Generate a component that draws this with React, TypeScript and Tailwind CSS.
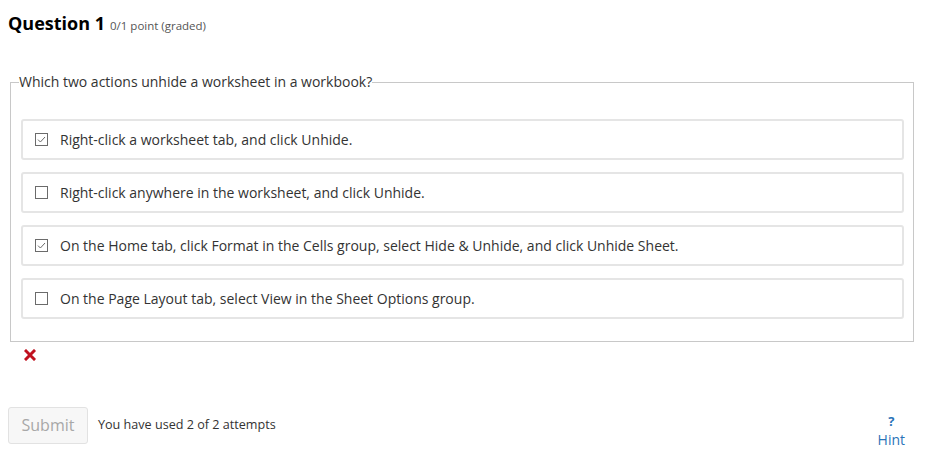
import React from "react";

const options = [
  { text: "Right-click a worksheet tab, and click Unhide.", checked: true },
  { text: "Right-click anywhere in the worksheet, and click Unhide.", checked: false },
  { text: "On the Home tab, click Format in the Cells group, select Hide & Unhide, and click Unhide Sheet.", checked: true },
  { text: "On the Page Layout tab, select View in the Sheet Options group.", checked: false },
];

function Box({ checked }: { checked: boolean }) {
  return (
    <svg width="13" height="13" viewBox="0 0 13 13" className="shrink-0">
      <rect x="0.5" y="0.5" width="12" height="12" fill="#fff" stroke="#6b6b6b" strokeWidth="1" />
      {checked && <path d="M3 6.6 L5.4 9 L10 4" fill="none" stroke="#6b6b6b" strokeWidth="1" />}
    </svg>
  );
}

export default function App() {
  return (
    <div className="w-[934px] h-[466px] bg-white text-[#333] overflow-hidden" style={{ fontFamily: '"Open Sans", sans-serif' }}>
      <div className="pt-[11px] pl-[8px] flex items-baseline">
        <span className="text-[18px] font-bold text-black leading-[24px]">Question 1</span>
        <span className="text-[11.5px] text-[#555] ml-[5px]">0/1 point (graded)</span>
      </div>
      <fieldset className="mt-[37px] ml-[10px] w-[904px] border border-[#c8c8c8] pl-[10px] pr-[9px] pb-[22px]">
        <legend className="text-[14px] leading-[20px] -ml-[2px] text-[#333]">Which two actions unhide a worksheet in a workbook?</legend>
        <div className="mt-[27px] flex flex-col gap-[12px]">
          {options.map((o, i) => (
            <div key={i} className="h-[41px] border-2 border-[#e5e5e5] rounded-[3px] flex items-center pl-[12px] gap-[12px]">
              <Box checked={o.checked} />
              <span className="text-[14px] text-[#333]">{o.text}</span>
            </div>
          ))}
        </div>
      </fieldset>
      <div className="ml-[24px] mt-[7px] h-[12px] w-[12px]">
        <svg width="12" height="12" viewBox="0 0 12 12">
          <path d="M2 2 L10 10 M10 2 L2 10" stroke="#c0111f" strokeWidth="3" strokeLinecap="square" />
        </svg>
      </div>
      <div className="mt-[46px] flex items-start justify-between pl-[8px] pr-[29px]">
        <div className="flex items-center">
          <div className="w-[80px] h-[37px] border border-[#e2e2e2] rounded-[3px] bg-[#f7f7f7] flex items-center justify-center text-[16px] leading-[20px] pb-[1px] text-[#a8a8a8]">
            Submit
          </div>
          <span className="ml-[10px] text-[12.6px] text-[#333]">You have used 2 of 2 attempts</span>
        </div>
        <div className="flex flex-col items-center mt-[6px] text-[#2a73b8]">
          <span className="text-[13px] font-bold leading-[16px]">?</span>
          <span className="text-[14px] leading-[18px] mt-[2px]">Hint</span>
        </div>
      </div>
    </div>
  );
}
